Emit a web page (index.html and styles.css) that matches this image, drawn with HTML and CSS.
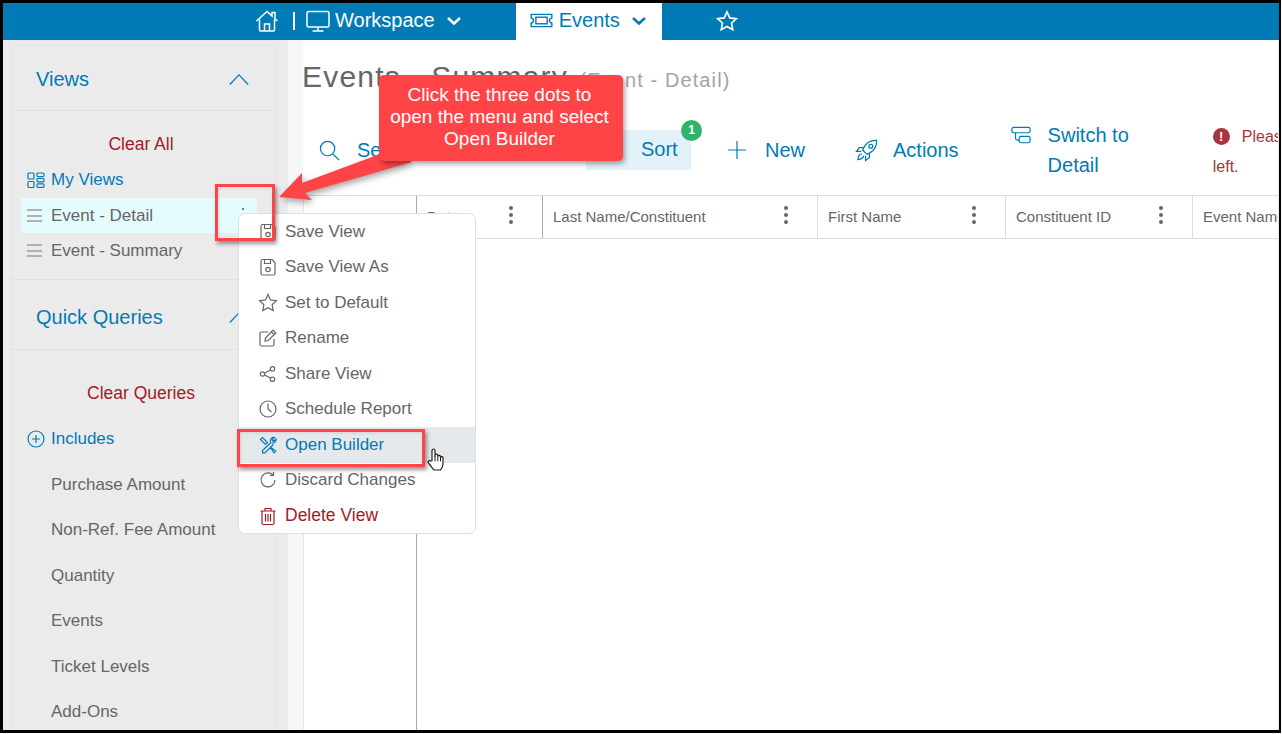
FILE: index.html
```html
<!DOCTYPE html>
<html lang="en">
<head>
  <meta charset="UTF-8" />
  <title>Events - Summary</title>
  <link rel="stylesheet" href="styles.css">
</head>
<body>

  <div class="frame">
    <header class="topbar">
      <a class="nav-home" href="#">
        <svg class="i-home" viewBox="0 0 24 24"><path d="M1.500 12 12 2.500l5 4.500V3.500h3V10l2.500 2M4.500 10.500V21a1 1 0 0 0 1 1h13a1 1 0 0 0 1-1V10.500M9.500 22v-7h5v7"/></svg>
      </a>
      <span class="nav-sep"></span>
      <a class="nav-item" href="#">
        <svg class="i-monitor" viewBox="0 0 24 24"><rect x="1" y="2.500" width="22" height="15.500" rx="1.500"/><path d="M12 18v3.500M6.500 22h11"/></svg>
        Workspace
        <svg class="i-chev" viewBox="0 0 16 10"><path d="M2 2l6 5.500L14 2"/></svg>
      </a>
      <a class="nav-item active" href="#">
        <svg class="i-ticket" viewBox="0 0 24 16"><path d="M1 1.500h22v4a2.500 2.500 0 0 0 0 5v4H1v-4a2.500 2.500 0 0 0 0-5z"/><rect x="6" y="4.500" width="12" height="7"/></svg>
        Events
        <svg class="i-chev" viewBox="0 0 16 10"><path d="M2 2l6 5.500L14 2"/></svg>
      </a>
      <a class="nav-fav" href="#">
        <svg class="i-star" viewBox="0 0 24 24"><path d="M12 2l3 6.600 7.200.9-5.300 4.900 1.400 7.100L12 18l-6.300 3.500 1.400-7.100L1.800 9.500 9 8.600z"/></svg>
      </a>
    </header>

    <div class="content">
      <aside class="sidebar">
        <div class="panel">
          <div class="panel-head">
            <span>Views</span>
            <svg class="i-up" viewBox="0 0 24 14"><path d="M2 12.500 12 2l10 10.500"/></svg>
          </div>
          <div class="panel-body views">
            <a class="clear" href="#">Clear All</a>
            <div class="row link">
              <svg class="i-views" viewBox="0 0 18 16"><rect x="1" y="1" width="6" height="6" rx="1"/><rect x="1" y="9.500" width="6" height="6" rx="1"/><rect x="10" y="1" width="7" height="3.500" rx="1"/><rect x="10" y="6.300" width="7" height="3.500" rx="1"/><rect x="10" y="11.800" width="7" height="3.500" rx="1"/></svg>
              My Views
            </div>
            <div class="row current">
              <span class="grip"></span>
              Event - Detail
              <span class="tiny-dot"></span>
            </div>
            <div class="row">
              <span class="grip"></span>
              Event - Summary
            </div>
          </div>
          <div class="panel-head tall">
            <span>Quick Queries</span>
            <svg class="i-up" viewBox="0 0 24 14"><path d="M2 12.500 12 2l10 10.500"/></svg>
          </div>
          <div class="panel-body">
            <a class="clear queries" href="#">Clear Queries</a>
            <div class="row link includes">
              <svg class="i-plus-c" viewBox="0 0 18 18"><circle cx="9" cy="9" r="8"/><path d="M9 5v8M5 9h8"/></svg>
              Includes
            </div>
            <div class="query">Purchase Amount</div>
            <div class="query">Non-Ref. Fee Amount</div>
            <div class="query">Quantity</div>
            <div class="query">Events</div>
            <div class="query">Ticket Levels</div>
            <div class="query">Add-Ons</div>
          </div>
        </div>
      </aside>

      <div class="gutter"></div>

      <main class="main">
        <h1 class="title">Events - Summary <small>(Event - Detail)</small></h1>

        <div class="toolbar">
          <a class="tool search" href="#">
            <svg viewBox="0 0 22 22"><circle cx="9" cy="9" r="7.500"/><path d="M14.500 14.500 21 21"/></svg>
            Se
          </a>
          <a class="tool sort" href="#">
            Sort
            <span class="badge">1</span>
          </a>
          <a class="tool new" href="#">
            <svg viewBox="0 0 22 22"><path d="M11 1v20M1 11h20"/></svg>
            New
          </a>
          <a class="tool actions" href="#">
            <svg viewBox="0 0 24 24"><path d="M22.500 1.500c-6-.5-10 2-13 7l-1.500 3 4.500 4.500 3-1.500c5-3 7.500-7 7-13zM9 9H4.500L1.500 13h5M15 15v4.500L11 22.500v-5M7 15.500c-2 0-3.500 1.500-4 6 4.500-.5 6-2 6-4"/><circle cx="16.500" cy="7.500" r="2"/></svg>
            Actions
          </a>
          <a class="tool switch" href="#">
            <svg viewBox="0 0 22 20"><rect x="1" y="1" width="20" height="6" rx="2"/><path d="M5 7v6a2 2 0 0 0 2 2h2"/><rect x="9" y="11" width="12" height="7" rx="2"/></svg>
            <span>Switch to<br>Detail</span>
          </a>
          <div class="notice">
            <span class="notice-line"><span class="notice-icon">!</span>Pleas</span>
            <span class="notice-end">left.</span>
          </div>
        </div>

        <div class="grid-head">
          <div class="col col-blank"></div>
          <div class="col col-date">Date<span class="kebab"></span></div>
          <div class="col col-last">Last Name/Constituent<span class="kebab"></span></div>
          <div class="col col-first">First Name<span class="kebab"></span></div>
          <div class="col col-id">Constituent ID<span class="kebab"></span></div>
          <div class="col col-event">Event Name</div>
        </div>
        <div class="grid-body">
          <div class="col-blank"></div>
        </div>
      </main>
    </div>

    <ul class="menu">
      <li><svg viewBox="0 0 18 18"><path d="M3.500 1.500h9.500l3 3v11a1.500 1.500 0 0 1-1.500 1.500h-11A1.500 1.500 0 0 1 2 15.500v-12.500a1.500 1.500 0 0 1 1.500-1.500zM5.500 1.500v4h6v-4"/><circle cx="9" cy="11.500" r="2.200"/></svg>Save View</li>
      <li><svg viewBox="0 0 18 18"><path d="M3.500 1.500h9.500l3 3v11a1.500 1.500 0 0 1-1.500 1.500h-11A1.500 1.500 0 0 1 2 15.500v-12.500a1.500 1.500 0 0 1 1.500-1.500zM5.500 1.500v4h6v-4"/><circle cx="9" cy="11.500" r="2.200"/></svg>Save View As</li>
      <li><svg viewBox="0 0 18 18"><path d="M9 .5l2.500 5.400 5.900.8-4.300 4 1.100 5.800L9 13.700l-5.200 2.800 1.100-5.800-4.300-4 5.900-.8z"/></svg>Set to Default</li>
      <li><svg viewBox="0 0 18 18"><path d="M15 10v5.500a1.500 1.500 0 0 1-1.500 1.500h-11A1.500 1.500 0 0 1 1 15.500v-11A1.500 1.500 0 0 1 2.500 3H9M6.500 9 14 1.200l2.800 2.800L9.300 11.500l-3.300.6zM12.500 3l2.600 2.700"/></svg>Rename</li>
      <li><svg viewBox="0 0 18 18"><circle cx="3.500" cy="9" r="2.200"/><circle cx="13.500" cy="3.800" r="2.200"/><circle cx="13.500" cy="14.200" r="2.200"/><path d="M5.500 8l6-3M5.500 10l6 3"/></svg>Share View</li>
      <li><svg viewBox="0 0 18 18"><circle cx="9" cy="9" r="8"/><path d="M9 3.500V9l3.500 3"/></svg>Schedule Report</li>
      <li class="hover"><svg viewBox="0 0 18 18"><path d="M1.500 3.500 3.500 1.500l5 5-2 2zM11 11l5.800 4-1.800 1.800-4-5.800M12 6.500l-8.500 8 .1 2.300 2.300.1 8.500-8.400M11.500 6c-.7-2.500 1.200-5 4-4.500l-2.500 2.500 1.500 1.500 2.500-2.500c.5 2.800-2.500 4.800-4.500 4"/></svg>Open Builder</li>
      <li><svg viewBox="0 0 18 18"><path d="M16 9a7 7 0 1 1-2-5M14.500 1v3.500H11"/></svg>Discard Changes</li>
      <li class="danger"><svg viewBox="0 0 18 18"><path d="M1.500 4h15M6 4V1.500h6V4M3 4v12a1.500 1.500 0 0 0 1.500 1.500h9A1.500 1.500 0 0 0 15 16V4M6.500 7v7.500M9 7v7.500M11.500 7v7.500"/></svg>Delete View</li>
    </ul>

    <!-- annotations drawn over the screenshot -->
    <svg class="arrow" viewBox="0 0 140 60"><polygon points="5,46 28,22 28,32 114,0 138,11 31,42 38,49"/></svg>
    <div class="callout">Click the three dots to<br>open the menu and select<br>Open Builder</div>
    <div class="mark mark-dots"></div>
    <div class="mark mark-builder"></div>
    <svg class="cursor" viewBox="0 0 18 24"><path d="M5 13V3a1.500 1.500 0 0 1 3 0v6.500V8a1.400 1.400 0 0 1 2.800 0v2-1a1.400 1.400 0 0 1 2.700 0v1.500-.5a1.300 1.300 0 0 1 2.500 0v6c0 3-1.500 5.500-2.500 6.500H7c-1.500-1.500-3-4-5.500-7-1-1.500.8-3 2-2z"/><path class="cursor-line" d="M8 9v5M10.800 10v4M13.500 10.500V14"/></svg>
  </div>

</body>
</html>
```

FILE: styles.css
```css
* {
  box-sizing: border-box;
  margin: 0;
  padding: 0;
}

body {
  font-family: "Liberation Sans", Arial, sans-serif;
  background: #fff;
  overflow: hidden;
}

a {
  text-decoration: none;
  color: inherit;
}

svg {
  fill: none;
  stroke: currentColor;
  flex: none;
}

.frame {
  position: relative;
  width: 1281px;
  height: 733px;
  border: solid #000;
  border-width: 3px 2px 3px 3px;
  overflow: hidden;
  display: flex;
  flex-direction: column;
}

/* soft edge next to the black border */
.frame::after {
  content: "";
  position: absolute;
  top: 37px;
  right: 0;
  bottom: 0;
  width: 1px;
  background: #e8e8e8;
}

/* top bar */
.topbar {
  display: flex;
  align-items: center;
  height: 37px;
  background: #007bb5;
  color: #fff;
  font-size: 20px;
  padding-left: 252px;
  flex: none;
}

.nav-home {
  display: flex;
  width: 24px;
  margin-bottom: 2px;
}

.i-home {
  width: 24px;
  height: 24px;
  stroke-width: 1.500;
}

.nav-sep {
  width: 2px;
  height: 18px;
  background: #fff;
  margin: 0 11px 2px 14px;
}

.nav-item {
  display: flex;
  align-items: center;
  height: 37px;
  padding-bottom: 2px;
}

.i-monitor {
  width: 24px;
  height: 24px;
  margin-right: 5px;
  stroke-width: 1.500;
}

.i-chev {
  width: 16px;
  height: 10px;
  margin-left: 11px;
  stroke-width: 2.500;
}

.nav-item.active {
  background: #fff;
  color: #007bb5;
  margin-left: 54px;
  width: 146px;
  padding-left: 14px;
}

.i-ticket {
  width: 23px;
  height: 15px;
  margin-right: 6px;
  stroke-width: 1.500;
}

.nav-fav {
  display: flex;
  margin-left: 54px;
  margin-bottom: 2px;
}

.i-star {
  width: 22px;
  height: 22px;
  stroke-width: 1.800;
}

/* sidebar */
.content {
  flex: 1;
  display: flex;
  min-height: 0;
}

.sidebar {
  width: 285px;
  background: #ebebeb;
  padding: 5px 11px 0 8px;
  flex: none;
  overflow: hidden;
}

.panel {
  border: 1px solid #e2e2e6;
  border-radius: 5px 5px 0 0;
  height: 720px;
}

.panel-head {
  display: flex;
  justify-content: space-between;
  align-items: center;
  height: 65px;
  padding: 2px 26px 0 24px;
  border-bottom: 1px solid #e0e0e4;
  color: #007bb5;
  font-size: 20px;
}

.panel-head.tall {
  height: 70px;
  padding-top: 6px;
}

.i-up {
  width: 22px;
  height: 13px;
  stroke-width: 1.400;
}

.panel-body {
  color: #666;
  font-size: 17px;
}

.views {
  height: 169px;
  border-bottom: 1px solid #e0e0e4;
}

.clear {
  display: block;
  color: #a01c28;
  text-align: center;
  font-size: 17.500px;
  padding: 23px 6px 0 0;
  line-height: 21px;
}

.clear.queries {
  padding-top: 33px;
}

.row {
  display: flex;
  align-items: center;
  height: 35px;
  margin-left: 9px;
  width: 236px;
  padding-left: 6px;
  position: relative;
}

.row.link {
  color: #007bb5;
  margin-top: 7px;
}

.row.current {
  background: #e5fcff;
}

.row.link + .row {
  margin-top: 1px;
}

.grip {
  width: 15px;
  height: 13px;
  margin-right: 9px;
  border-top: 2px solid #b0b0b0;
  border-bottom: 2px solid #b0b0b0;
  position: relative;
}

.grip::after {
  content: "";
  position: absolute;
  left: 0;
  right: 0;
  top: 3.500px;
  height: 2px;
  background: #b0b0b0;
}

.tiny-dot {
  position: absolute;
  right: 13px;
  top: 10px;
  width: 2px;
  height: 2px;
  border-radius: 50%;
  background: #555;
}

.i-views {
  width: 18px;
  height: 16px;
  margin-right: 6px;
  stroke-width: 1.200;
}

.i-plus-c {
  width: 18px;
  height: 18px;
  margin-right: 6px;
  stroke-width: 1.200;
}

.row.includes {
  margin-top: 22px;
  height: 26px;
}

.query {
  height: 45.500px;
  line-height: 45.500px;
  padding-left: 39px;
}

.includes + .query {
  margin-top: 9.500px;
}

/* main area */
.gutter {
  width: 15px;
  background: #f7f7f7;
  flex: none;
}

.main {
  flex: 1;
  min-width: 0;
  overflow: hidden;
  display: flex;
  flex-direction: column;
}

.title {
  font-weight: normal;
  font-size: 30px;
  letter-spacing: 1.200px;
  color: #666;
  height: 56px;
  padding-top: 19px;
  margin-left: -1px;
  line-height: 36px;
  white-space: nowrap;
}

.title small {
  font-size: 20px;
  letter-spacing: 1.100px;
  color: #a3a3a3;
  margin-left: 2px;
}

.toolbar {
  display: flex;
  align-items: center;
  height: 99px;
  padding-top: 9px;
  color: #007bb5;
  font-size: 20px;
  white-space: nowrap;
  flex: none;
}

.tool {
  display: flex;
  align-items: center;
  flex: none;
}

.tool svg {
  stroke-width: 1.300;
}

.search {
  margin-left: 16px;
  width: 267px;
}

.search svg {
  width: 21px;
  height: 21px;
  margin-right: 17px;
}

.sort {
  position: relative;
  width: 105px;
  height: 40px;
  background: #e3f2fa;
  padding-left: 55px;
  margin-top: -1px;
}

.badge {
  position: absolute;
  right: -11px;
  top: -10px;
  width: 21px;
  height: 21px;
  border-radius: 50%;
  background: #32b36b;
  color: #fff;
  font-size: 12px;
  font-weight: bold;
  text-align: center;
  line-height: 20px;
}

.new {
  margin-left: 36px;
}

.new svg {
  width: 20px;
  height: 20px;
  margin-right: 18px;
}

.actions {
  margin-left: 50px;
}

.actions svg {
  width: 23px;
  height: 23px;
  margin-right: 15px;
}

.switch {
  margin-left: 52px;
  align-items: flex-start;
  line-height: 30px;
  margin-top: -1px;
}

.switch svg {
  width: 20px;
  height: 19px;
  margin: 6px 17px 0 0;
}

.notice {
  margin: 4px 0 0 84px;
  width: 70px;
  overflow: hidden;
  flex: none;
  font-size: 16px;
  color: #a8343c;
  line-height: 30px;
}

.notice-line,
.notice-end {
  display: block;
}

.notice-icon {
  display: inline-block;
  width: 17px;
  height: 17px;
  border-radius: 50%;
  background: #a8343c;
  color: #fff;
  font-size: 13px;
  font-weight: bold;
  text-align: center;
  line-height: 17px;
  margin-right: 12px;
  vertical-align: 1px;
}

.grid-head {
  display: flex;
  height: 44px;
  border-top: 1px solid #ddd;
  border-bottom: 1px solid #ddd;
  flex: none;
  font-size: 15px;
  color: #666;
  white-space: nowrap;
}

.col {
  position: relative;
  display: flex;
  align-items: center;
  padding: 0 0 2px 10px;
  border-left: 1px solid #ddd;
  flex: none;
}

.col-blank {
  width: 113px;
  border-left: 1px solid #e4e4e4;
}

.col-date {
  width: 126px;
  border-left-color: #aaa;
}

.col-last {
  width: 275px;
  border-left-color: #aaa;
}

.col-first {
  width: 188px;
}

.col-id {
  width: 187px;
}

.col-event {
  width: 120px;
}

.kebab {
  position: absolute;
  right: 29px;
  top: 10px;
  width: 4px;
  height: 4px;
  border-radius: 50%;
  background: #666;
  box-shadow: 0 7px 0 #666, 0 14px 0 #666;
}

.grid-body {
  flex: 1;
  display: flex;
}

.grid-body .col-blank {
  width: 114px;
  border-right: 1px solid #aaa;
}

/* view menu */
.menu {
  position: absolute;
  left: 235px;
  top: 210px;
  width: 238px;
  height: 321px;
  background: #fff;
  border: 1px solid #e0e0e0;
  border-radius: 7px;
  list-style: none;
  color: #666;
  font-size: 17px;
}

.menu li {
  display: flex;
  align-items: center;
  height: 35.500px;
  padding-left: 20px;
}

.menu li svg {
  width: 18px;
  height: 18px;
  margin-right: 8px;
  stroke-width: 1.200;
  overflow: visible;
}

.menu .hover {
  background: #e6e9ec;
  color: #007bb5;
}

.menu .danger {
  color: #a01c28;
  font-size: 17.500px;
}

/* annotations */
.arrow {
  position: absolute;
  left: 271px;
  top: 148px;
  width: 140px;
  height: 60px;
  overflow: visible;
  fill: #ff4448;
  stroke: none;
  filter: drop-shadow(2px 3px 3px rgba(0, 0, 0, 0.35));
}

.callout {
  position: absolute;
  left: 376px;
  top: 72px;
  width: 244px;
  height: 86px;
  padding: 9px 3px 0 0;
  background: #ff4448;
  border-radius: 5px;
  box-shadow: 2px 3px 5px rgba(0, 0, 0, 0.35);
  color: #fff;
  font-size: 19px;
  line-height: 22px;
  text-align: center;
}

.mark {
  position: absolute;
  border: 3px solid #ff4448;
  box-shadow: 2px 3px 4px rgba(0, 0, 0, 0.4), inset 1px 1px 3px rgba(0, 0, 0, 0.1);
}

.mark-dots {
  left: 212px;
  top: 181px;
  width: 60px;
  height: 57px;
}

.mark-builder {
  left: 234px;
  top: 426px;
  width: 188px;
  height: 38px;
}

.cursor {
  position: absolute;
  left: 424px;
  top: 444px;
  width: 18px;
  height: 25px;
  fill: #fff;
  stroke: #222;
  stroke-width: 1.200;
}

.cursor .cursor-line {
  stroke-width: 1;
}
```
